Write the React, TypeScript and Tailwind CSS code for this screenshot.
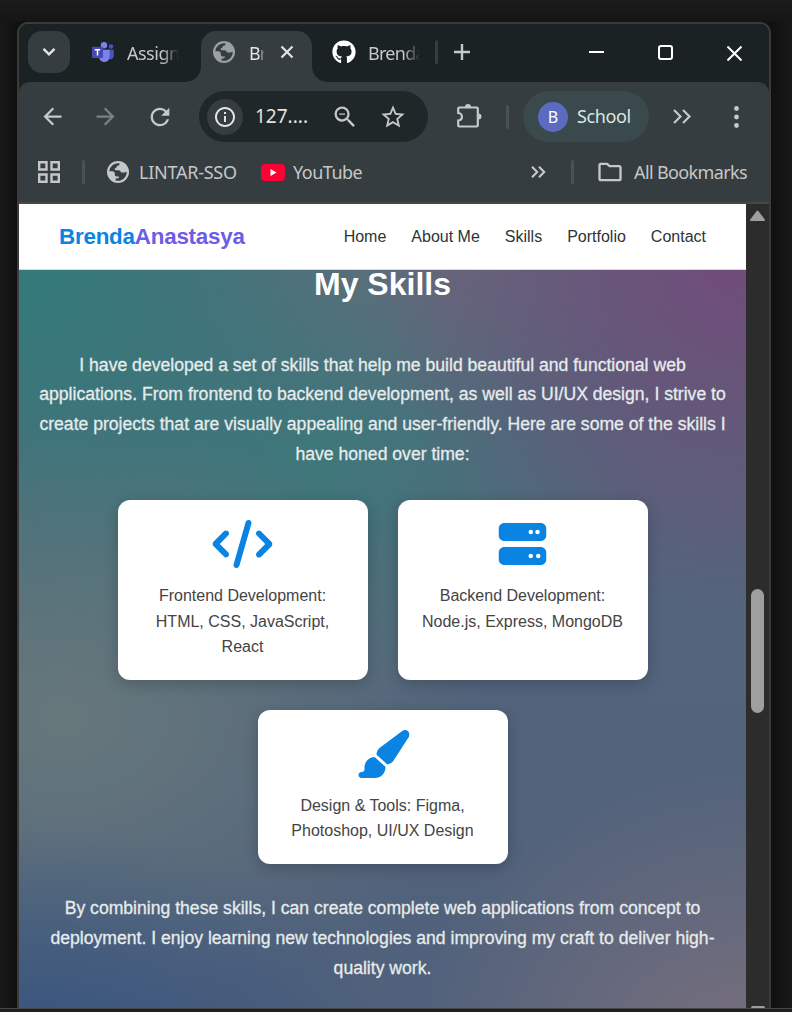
import React from "react";
import { FaCode, FaServer, FaPaintbrush } from "react-icons/fa6";
import { FaGithub } from "react-icons/fa";
import {
  MdArrowBack,
  MdArrowForward,
  MdRefresh,
  MdZoomOut,
  MdStarBorder,
  MdOutlineFolder,
  MdOutlineInfo,
} from "react-icons/md";

function Globe({ className, hole }: { className: string; hole: string }) {
  return (
    <svg viewBox="0 0 22 22" className={className}>
      <circle cx="11" cy="11" r="11" fill="currentColor" />
      <path
        fill={hole}
        d="M2.300 10.200A8.800 8.800 0 0 1 12.600 2.400C12.600 4.300 11.200 4.800 9.800 4.900 9.800 6.200 9 7.300 7.600 7.500 7.600 8.700 8 9.300 9.200 9.300h2.400c1.500 0 2.300 1 2.300 2.300h3c1.200 0 1.400-.8 2.800-.8A8.800 8.800 0 0 1 8.600 19.500v-2h1.600c1.200 0 1.800-.8 1.800-2H9.800c-1.300 0-2-.8-2-2v-1.100c0-1.200-.9-2.200-2.200-2.200z"
      />
    </svg>
  );
}

function Teams() {
  return (
    <svg viewBox="0 0 22 21" className="h-[21px] w-[22px]">
      <circle cx="19" cy="4.500" r="2.300" fill="#4b53bc" />
      <path d="M15 7.800h6.800v6a3.500 3.500 0 0 1-5 3.100z" fill="#4b53bc" />
      <circle cx="12" cy="3.300" r="3.200" fill="#7b83eb" />
      <path d="M7 7.800h10.600v7a5.300 5.300 0 0 1-10.600 0z" fill="#7b83eb" />
      <rect x="0" y="4.800" width="11" height="11.200" rx="1" fill="#4549b5" />
      <path d="M2.800 7.800h5.400M5.500 7.800v5.800" stroke="#fff" strokeWidth="1.500" />
    </svg>
  );
}

const navItems = ["Home", "About Me", "Skills", "Portfolio", "Contact"];

const skills = [
  { icon: FaCode, size: "w-[60px]", lines: ["Frontend Development:", "HTML, CSS, JavaScript,", "React"] },
  { icon: FaServer, size: "w-[48px]", lines: ["Backend Development:", "Node.js, Express, MongoDB"] },
  { icon: FaPaintbrush, size: "w-[54px]", lines: ["Design & Tools: Figma,", "Photoshop, UI/UX Design"] },
];

const intro = [
  "I have developed a set of skills that help me build beautiful and functional web",
  "applications. From frontend to backend development, as well as UI/UX design, I strive to",
  "create projects that are visually appealing and user-friendly. Here are some of the skills I",
  "have honed over time:",
];

const outro = [
  "By combining these skills, I can create complete web applications from concept to",
  "deployment. I enjoy learning new technologies and improving my craft to deliver high-",
  "quality work.",
];

function TabStrip() {
  return (
    <div className="flex h-[58px] bg-[#1b2224] text-[18px]">
      <div className="mt-[7px] ml-[9px] grid size-[42px] place-items-center rounded-[14px] bg-[#353d40]">
        <svg viewBox="0 0 14 10" className="h-[10px] w-[14px]" fill="none" stroke="#e3e3e3" strokeWidth="2.400">
          <path d="M1.500 1.800 7 7.300l5.500-5.500" />
        </svg>
      </div>
      <div className="ml-[22px] mt-[18px] h-[21px]"><Teams /></div>
      <div className="ml-[13px] mt-[16px] w-[52px] overflow-hidden whitespace-nowrap leading-[26px] tracking-[-0.5px] text-[#c4c9ca] [mask-image:linear-gradient(to_right,#000_68%,transparent)]">
        Assign
      </div>
      <div className="ml-[7px] mt-[43px] size-[15px] bg-[radial-gradient(circle_at_0_0,#1b2224_14.500px,#353d40_15px)]" />
      <div className="mt-[7px] flex h-[51px] w-[111px] rounded-t-[15px] bg-[#353d40]">
        <Globe className="ml-[12px] mt-[10px] size-[22px] text-[#9aa0a6]" hole="#353d40" />
        <div className="ml-[14px] mt-[9px] w-[16px] overflow-hidden whitespace-nowrap leading-[26px] tracking-[-0.9px] text-[#e3e3e3] [mask-image:linear-gradient(to_right,#000_60%,transparent)]">
          Br
        </div>
        <svg viewBox="0 0 14 14" className="ml-[15px] mt-[14px] size-[14px]" stroke="#e3e3e3" strokeWidth="2.200">
          <path d="M1.500 1.500l11 11M12.500 1.500l-11 11" />
        </svg>
      </div>
      <div className="mt-[43px] size-[15px] bg-[radial-gradient(circle_at_100%_0,#1b2224_14.500px,#353d40_15px)]" />
      <FaGithub className="ml-[5px] mt-[16px] size-[24px] text-white" />
      <div className="ml-[12px] mt-[16px] w-[52px] overflow-hidden whitespace-nowrap leading-[26px] tracking-[-0.7px] text-[#c4c9ca] [mask-image:linear-gradient(to_right,#000_68%,transparent)]">
        Brenda
      </div>
      <div className="ml-[15px] mt-[16px] h-[24px] w-[3px] rounded bg-[#353d40]" />
      <svg viewBox="0 0 16 16" className="ml-[16px] mt-[20px] size-[16px]" stroke="#c4c9ca" strokeWidth="2.400">
        <path d="M8 0v16M0 8h16" />
      </svg>
      <div className="ml-[119px] mt-[27px] h-[2px] w-[15px] bg-white" />
      <div className="ml-[54px] mt-[21px] size-[15px] rounded-[3px] border-2 border-white" />
      <svg viewBox="0 0 15 15" className="ml-[54px] mt-[22px] size-[15px]" stroke="#fff" strokeWidth="2">
        <path d="M.500.500l14 14M14.500.500l-14 14" />
      </svg>
    </div>
  );
}

function Toolbar() {
  return (
    <div className="flex h-[69px] items-center text-[#c4c9ca]">
      <MdArrowBack className="ml-[20px] size-[27px]" />
      <MdArrowForward className="ml-[26px] size-[27px] text-[#7b8183]" />
      <MdRefresh className="ml-[27px] size-[28px]" />
      <div className="ml-[25px] flex h-[51px] w-[229px] items-center rounded-full bg-[#1f2729]">
        <div className="ml-[8px] grid size-[36px] place-items-center rounded-full bg-[#353d40] text-[#e3e3e3]">
          <MdOutlineInfo className="size-[24px]" />
        </div>
        <span className="ml-[12px] w-[56px] text-[19px] text-[#e3e3e3]">127....</span>
        <MdZoomOut className="ml-[20px] size-[28px] text-[#c7c7c7]" />
        <MdStarBorder className="ml-[20px] size-[28px] text-[#c7c7c7]" />
      </div>
      <svg viewBox="0 0 26 26" className="ml-[28px] mb-[2px] size-[26px]" fill="none" stroke="currentColor" strokeWidth="2.200">
        <path d="M3.200 4.500h17.600q1 0 1 1v17q0 1-1 1H3.200q-1 0-1-1v-5c5-.5 5-7 0-7.500v-4.500q0-1 1-1z" />
        <path d="M9 4a3 3 0 0 1 6 0zM22.500 10.500a3 3 0 0 1 0 6z" fill="currentColor" stroke="none" />
      </svg>
      <div className="ml-[24px] h-[24px] w-[3px] rounded bg-[#4a5255]" />
      <div className="ml-[14px] flex h-[51px] w-[126px] items-center rounded-full bg-[#3a494b] text-[18px] text-[#dce5e6]">
        <span className="ml-[15px] grid size-[30px] place-items-center rounded-full bg-[#5c6bc0] text-[16px] text-white">B</span>
        <span className="ml-[9px] tracking-[-0.4px]">School</span>
      </div>
      <svg viewBox="0 0 19 15" className="ml-[24px] h-[15px] w-[19px]" fill="none" stroke="currentColor" strokeWidth="2.200">
        <path d="M1 1l6.500 6.500L1 14M10 1l6.500 6.500L10 14" />
      </svg>
      <svg viewBox="0 0 5 22" className="ml-[42px] h-[22px] w-[5px]" fill="currentColor">
        <circle cx="2.500" cy="2.500" r="2.400" />
        <circle cx="2.500" cy="11" r="2.400" />
        <circle cx="2.500" cy="19.500" r="2.400" />
      </svg>
    </div>
  );
}

function Bookmarks() {
  return (
    <div className="flex h-[42px] items-center text-[18px] text-[#c7c7c7]">
      <svg viewBox="0 0 22 22" className="ml-[19px] size-[22px]" fill="none" stroke="currentColor" strokeWidth="2.400">
        <path d="M1.200 1.200h7.300v7.300H1.200zM13.500 1.200h7.300v7.300h-7.300zM1.200 13.500h7.300v7.300H1.200zM13.500 13.500h7.300v7.300h-7.300z" />
      </svg>
      <div className="ml-[22px] h-[24px] w-[3px] rounded bg-[#4a5255]" />
      <Globe className="ml-[22px] size-[22px] text-[#c4c7ca]" hole="#353d40" />
      <span className="ml-[10px] w-[98px] whitespace-nowrap tracking-[-0.25px]">LINTAR-SSO</span>
      <svg viewBox="0 0 24 17" className="ml-[24px] h-[17px] w-[24px]">
        <rect width="24" height="17" rx="4" fill="#ff0033" />
        <path d="M9.500 5v7l6-3.500z" fill="#fff" />
      </svg>
      <span className="ml-[8px] w-[70px] whitespace-nowrap tracking-[-0.5px]">YouTube</span>
      <svg viewBox="0 0 15 12" className="ml-[168px] h-[12px] w-[15px]" fill="none" stroke="currentColor" strokeWidth="2.100">
        <path d="M1 .8 6.200 6 1 11.200M8 .8 13.200 6 8 11.200" />
      </svg>
      <div className="ml-[25px] h-[24px] w-[3px] rounded bg-[#4a5255]" />
      <MdOutlineFolder className="ml-[22px] size-[28px]" />
      <span className="ml-[10px] whitespace-nowrap tracking-[-0.620px]">All Bookmarks</span>
    </div>
  );
}

export default function App() {
  return (
    <div className="flex h-[1012px] w-[792px] flex-col overflow-hidden bg-[linear-gradient(to_right,#191919,#101010_17px,#101010_771px,#191919)]">
      <div className="h-[22px] shrink-0 bg-[linear-gradient(to_bottom,#1b1b1b,#151515)]" />
      <div className="ml-[17px] flex h-[986px] w-[754px] shrink-0 flex-col overflow-hidden rounded-t-[11px] border-2 border-b-0 border-[#3b3b3b] bg-[#1b2224] font-['Noto_Sans',sans-serif]">
        <TabStrip />
        <div className="h-[122px] shrink-0 rounded-t-[11px] border-b-2 border-[#464949] bg-[#353d40]">
          <Toolbar />
          <Bookmarks />
        </div>
        <div className="flex min-h-0 flex-1 font-['Liberation_Sans',Arial,sans-serif]">
          <main className="flex w-[727px] flex-col bg-[radial-gradient(ellipse_400px_360px_at_102%_6%,#714c79_5%,transparent),radial-gradient(ellipse_380px_230px_at_0%_106%,#36547f,transparent),radial-gradient(ellipse_340px_300px_at_100%_107%,#7a707d,transparent),radial-gradient(ellipse_420px_300px_at_6%_64%,#66787b_0%,transparent),radial-gradient(ellipse_440px_480px_at_0%_8%,#347a7a_5%,transparent),radial-gradient(ellipse_300px_190px_at_52%_4%,#686c7c,transparent),radial-gradient(ellipse_320px_260px_at_42%_31%,#41777a,transparent),linear-gradient(#56677c,#50617b)]">
            <header className="flex h-[66px] shrink-0 items-center justify-between border-b border-[#d5dada] bg-white pr-[40px] pl-[40px]">
              <div className="text-[22.400px] font-bold tracking-[-0.230px]">
                <span className="text-[#0984e3]">Brenda</span><span className="text-[#6c5ce7]">Anastasya</span>
              </div>
              <nav className="flex gap-[25px] text-[16px] text-[#2d3436]">
                {navItems.map((n) => <a key={n}>{n}</a>)}
              </nav>
            </header>
            <h2 className="mt-[-6px] h-[40px] text-center text-[32px] leading-[40px] font-bold text-white">My Skills</h2>
            <div className="mt-[46.600px] text-center text-[17.600px] leading-[29.800px] text-[#e6ebeb] [-webkit-text-stroke:0.3px_#e6ebeb]">
              {intro.map((l) => <p key={l} className="whitespace-nowrap">{l}</p>)}
            </div>
            <div className="mt-[30.200px] flex flex-wrap justify-center gap-[30px]">
              {skills.map(({ icon: Icon, size, lines }) => (
                <article key={lines[0]} className="w-[250px] rounded-[12px] bg-white p-[20px] text-center text-[16px] leading-[25.600px] text-[#444] shadow-[0_4px_15px_rgba(0,0,0,0.2)]">
                  <Icon className={`mx-auto mb-[15px] h-[48px] ${size} -translate-x-[0.5px] text-[#0984e3]`} />
                  {lines.map((l) => <p key={l} className="whitespace-nowrap">{l}</p>)}
                </article>
              ))}
            </div>
            <div className="mt-[29.800px] text-center text-[17.600px] leading-[29.920px] text-[#e6ebeb] [-webkit-text-stroke:0.3px_#e6ebeb]">
              {outro.map((l) => <p key={l} className="whitespace-nowrap">{l}</p>)}
            </div>
          </main>
          <aside className="flex w-[23px] flex-col items-center bg-[#2c2c2c]">
            <svg viewBox="0 0 15 11" className="mt-[6px] h-[11px] w-[15px]" fill="#9f9f9f" stroke="#9f9f9f" strokeWidth="2" strokeLinejoin="round">
              <path d="M7.500 1.500 14 10H1z" />
            </svg>
            <div className="mt-[368px] h-[124px] w-[13px] rounded-full bg-[#9f9f9f]" />
            <div className="mt-auto h-[2px] w-[14px] rounded-t bg-[#9f9f9f]" />
          </aside>
        </div>
      </div>
      <div className="h-[4px] shrink-0 border-t border-[#444] bg-[#211f20]" />
    </div>
  );
}
